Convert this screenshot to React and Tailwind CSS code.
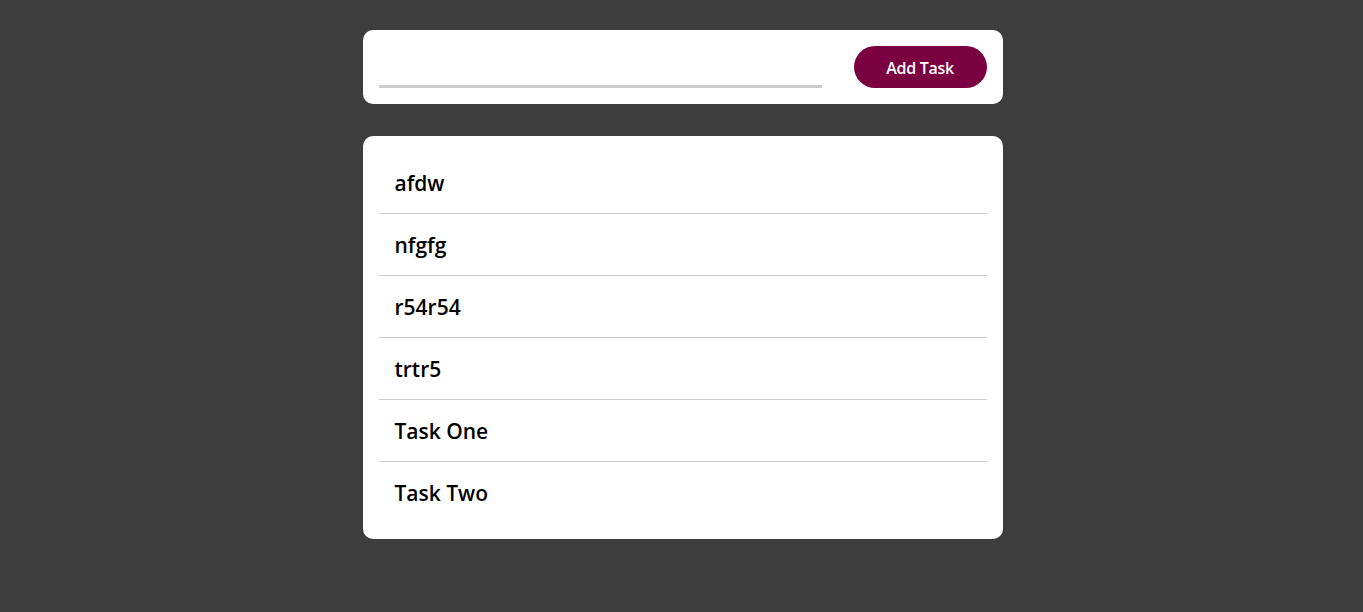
import React, { useState } from 'react';

const initialTasks = ['afdw', 'nfgfg', 'r54r54', 'trtr5', 'Task One', 'Task Two'];

export default function App() {
  const [tasks, setTasks] = useState(initialTasks);
  const [text, setText] = useState('');

  const addTask = (e) => {
    e.preventDefault();
    if (!text.trim()) return;
    setTasks([...tasks, text.trim()]);
    setText('');
  };

  return (
    <div className="min-h-screen bg-[#3d3d3d] pt-[30px] pl-[2px] flex justify-center font-['Open_Sans',sans-serif]">
      <div className="w-[640px]">
        <form onSubmit={addTask} className="bg-white rounded-[10px] p-4 flex items-center gap-8">
          <input
            value={text}
            onChange={(e) => setText(e.target.value)}
            className="w-[443px] h-[42px] pt-[18px] border-b-[3px] border-[#cccccc] outline-none text-base"
          />
          <button
            type="submit"
            className="flex-1 h-[42px] pt-px rounded-full bg-[#7b0042] text-white text-[16px] font-semibold tracking-[-0.3px]"
          >
            Add Task
          </button>
        </form>

        <div className="mt-8 bg-white rounded-[10px] p-4">
          {tasks.map((task, i) => (
            <div
              key={i}
              className={`flex items-center px-4 pt-[2px] text-[21px] font-semibold text-black ${i > 0 ? 'border-t border-[#cccccc] h-[62px]' : 'h-[61px]'}`}
            >
              {task}
            </div>
          ))}
        </div>
      </div>
    </div>
  );
}
